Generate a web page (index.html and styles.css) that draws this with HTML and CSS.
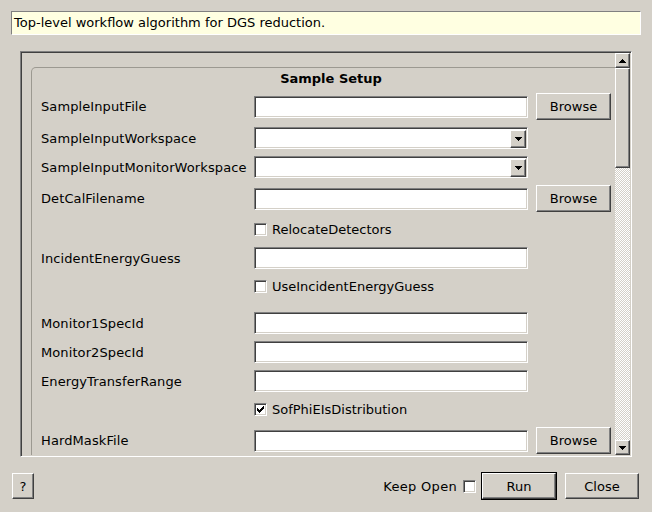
FILE: index.html
```html
<!DOCTYPE html>
<html>
<head>
<meta charset="utf-8">
<link rel="stylesheet" href="styles.css">
</head>
<body>
<div class="desc">Top-level workflow algorithm for DGS reduction.</div>
<div class="frame">
  <div class="viewport">
    <div class="group">
      <div class="group-title">Sample Setup</div>
      <div class="rows">
        <div class="row tall"><span class="label">SampleInputFile</span><span class="input"></span><button class="btn browse">Browse</button></div>
        <div class="row"><span class="label">SampleInputWorkspace</span><span class="input combo"><span class="combo-btn"><svg width="7" height="4" viewBox="0 0 7 4" shape-rendering="crispEdges"><path d="M0 0h7v1h-7z M1 1h5v1h-5z M2 2h3v1h-3z M3 3h1v1h-1z" fill="#000"/></svg></span></span></div>
        <div class="row"><span class="label">SampleInputMonitorWorkspace</span><span class="input combo"><span class="combo-btn"><svg width="7" height="4" viewBox="0 0 7 4" shape-rendering="crispEdges"><path d="M0 0h7v1h-7z M1 1h5v1h-5z M2 2h3v1h-3z M3 3h1v1h-1z" fill="#000"/></svg></span></span></div>
        <div class="row tall"><span class="label">DetCalFilename</span><span class="input"></span><button class="btn browse">Browse</button></div>
        <div class="row chkrow"><span class="chk"><span class="box"></span><span>RelocateDetectors</span></span></div>
        <div class="row"><span class="label">IncidentEnergyGuess</span><span class="input"></span></div>
        <div class="row chkrow"><span class="chk"><span class="box"></span><span>UseIncidentEnergyGuess</span></span></div>
        <div class="row after-hidden"><span class="label">Monitor1SpecId</span><span class="input"></span></div>
        <div class="row"><span class="label">Monitor2SpecId</span><span class="input"></span></div>
        <div class="row"><span class="label">EnergyTransferRange</span><span class="input"></span></div>
        <div class="row chkrow"><span class="chk"><span class="box"><svg width="11" height="11" viewBox="0 0 11 11" shape-rendering="crispEdges"><path d="M2 4h1v3h-1z M3 5h1v3h-1z M4 6h1v3h-1z M5 5h1v3h-1z M6 4h1v3h-1z M7 3h1v3h-1z M8 2h1v3h-1z" fill="#000"/></svg></span><span>SofPhiEIsDistribution</span></span></div>
        <div class="row tall"><span class="label">HardMaskFile</span><span class="input"></span><button class="btn browse">Browse</button></div>
      </div>
    </div>
  </div>
  <div class="scrollbar">
    <div class="sb-btn"><svg width="7" height="4" viewBox="0 0 7 4" shape-rendering="crispEdges"><path d="M3 0h1v1h-1z M2 1h3v1h-3z M1 2h5v1h-5z M0 3h7v1h-7z" fill="#000"/></svg></div>
    <div class="sb-thumb"></div>
    <div class="sb-track"></div>
    <div class="sb-btn"><svg width="7" height="4" viewBox="0 0 7 4" shape-rendering="crispEdges"><path d="M0 0h7v1h-7z M1 1h5v1h-5z M2 2h3v1h-3z M3 3h1v1h-1z" fill="#000"/></svg></div>
  </div>
</div>
<div class="footer">
  <button class="btn help">?</button>
  <span class="spacer"></span>
  <span class="keep">Keep Open</span>
  <span class="box"></span>
  <button class="btn run">Run</button>
  <button class="btn close">Close</button>
</div>
</body>
</html>
```

FILE: styles.css
```css
* { box-sizing: border-box; }
html, body { margin: 0; padding: 0; }
body {
  background: #d4d0c8;
  font-family: "DejaVu Sans", sans-serif;
  font-size: 13px;
  color: #000;
  width: 652px;
  height: 512px;
  overflow: hidden;
}
.desc {
  margin: 11px 11px 0;
  height: 24px;
  background: #ffffe1;
  border: 1px solid;
  border-color: #808080 #fff #fff #808080;
  padding-left: 2px;
  line-height: 22px;
  white-space: nowrap;
}
.frame {
  margin: 16px 0 0 20px;
  width: 612px;
  height: 406px;
  display: flex;
  border: 1px solid;
  border-color: #808080 #fff #fff #808080;
  box-shadow: inset 1px 1px 0 #404040, inset -1px -1px 0 #d4d0c8;
  padding: 1px;
}
.viewport {
  flex: 1;
  overflow: hidden;
}
.group {
  margin: 14px 0 0 9px;
  width: 600px;
  height: 460px;
  border: 1px solid #9c9991;
  border-bottom: none;
  border-radius: 5px 5px 0 0;
}
.group-title {
  height: 21px;
  line-height: 21px;
  text-align: center;
  font-weight: bold;
}
.rows {
  margin-top: 4px;
  padding-left: 9px;
  display: flex;
  flex-direction: column;
  gap: 7px;
}
.row {
  display: grid;
  grid-template-columns: 205px 274px 75px;
  column-gap: 8px;
  align-items: center;
  height: 22px;
}
.row.tall { height: 27px; }
.row.chkrow { height: 21px; }
.row.after-hidden { margin-top: 8px; }
.label { white-space: nowrap; grid-column: 1; letter-spacing: 0.1px; }
.input {
  grid-column: 2;
  height: 22px;
  background: #fff;
  border: 1px solid;
  border-color: #808080 #fff #fff #808080;
  box-shadow: inset 1px 1px 0 #404040, inset -1px -1px 0 #d4d0c8;
}
.combo {
  display: flex;
  justify-content: flex-end;
  padding: 1px;
}
.combo-btn {
  width: 16px;
  height: 18px;
  margin-top: 1px;
  background: #d4d0c8;
  border: 1px solid;
  border-color: #fff #404040 #404040 #fff;
  box-shadow: inset -1px -1px 0 #808080;
  display: flex;
  align-items: center;
  justify-content: center;
}
.btn {
  font-family: inherit;
  font-size: 13px;
  color: #000;
  background: #d4d0c8;
  border: 1px solid;
  border-color: #fff #404040 #404040 #fff;
  box-shadow: inset -1px -1px 0 #808080;
  padding: 0;
  margin: 0;
}
.browse {
  grid-column: 3;
  height: 27px;
  width: 75px;
}
.chk {
  grid-column: 2 / span 2;
  display: flex;
  align-items: center;
  gap: 5px;
  white-space: nowrap;
}
.box {
  width: 13px;
  height: 13px;
  flex: none;
  background: #fff;
  border: 1px solid;
  border-color: #808080 #fff #fff #808080;
  box-shadow: inset 1px 1px 0 #404040, inset -1px -1px 0 #d4d0c8;
  display: flex;
  align-items: center;
  justify-content: center;
}
.box svg { display: block; }
.scrollbar {
  width: 15px;
  display: flex;
  flex-direction: column;
}
.sb-btn, .sb-thumb {
  background: #d4d0c8;
  border: 1px solid;
  border-color: #fff #404040 #404040 #fff;
  box-shadow: inset -1px -1px 0 #808080;
}
.sb-btn {
  height: 15px;
  display: flex;
  align-items: center;
  justify-content: center;
}
.sb-thumb { height: 100px; }
.sb-track {
  flex: 1;
  background: repeating-conic-gradient(#fff 0 25%, #d4d0c8 0 50%) 0 0 / 2px 2px;
}
.footer {
  margin-top: 15px;
  height: 28px;
  padding: 0 13px 0 12px;
  display: flex;
  align-items: center;
}
.help { width: 22px; height: 26px; }
.spacer { flex: 1; }
.keep { margin-right: 6px; white-space: nowrap; letter-spacing: 0.3px; }
.run {
  width: 74px;
  height: 26px;
  margin-left: 6px;
  box-shadow: 0 0 0 1px #000, inset -1px -1px 0 #808080;
}
.close {
  width: 74px;
  height: 26px;
  margin-left: 9px;
}
```
